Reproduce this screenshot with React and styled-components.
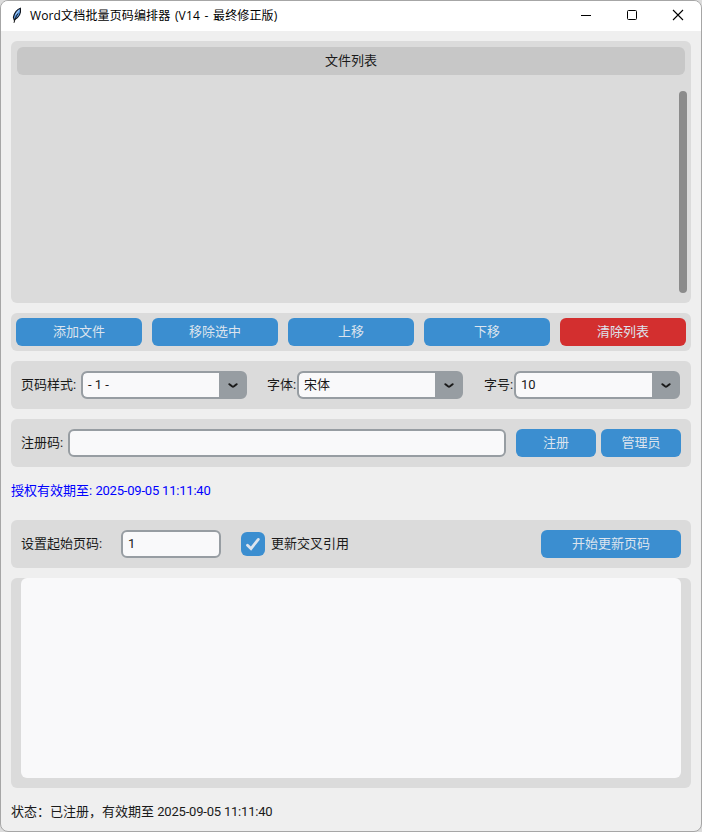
import React from "react";
import styled, { createGlobalStyle } from "styled-components";

const GlobalStyle = createGlobalStyle`
  * { box-sizing: border-box; }
  html, body { margin: 0; padding: 0; background: #dcdcdc; }
  button, input { font: inherit; }
`;

const Window = styled.div`
  width: 702px;
  height: 832px;
  display: flex;
  flex-direction: column;
  overflow: hidden;
  border: 1px solid #a6a6a6;
  border-radius: 8px;
  background: #efefef;
  color: #1a1a1a;
  font: 13px/18px Roboto, "Noto Sans CJK SC", sans-serif;
  white-space: nowrap;
`;

const TitleBar = styled.header`
  height: 30px;
  flex: none;
  display: flex;
  align-items: center;
  padding-left: 9px;
  background: #fff;
  color: #000;
`;

const Title = styled.h1`
  flex: 1;
  margin: 0 0 0 6px;
  font: 400 12px/18px "Open Sans", "Noto Sans CJK SC", sans-serif;
  letter-spacing: 0.14px;
  word-spacing: 1.3px;
`;

const WindowControl = styled.button`
  width: 46px;
  height: 30px;
  padding: 0 0 2px;
  border: 0;
  background: none;
  display: flex;
  align-items: center;
  justify-content: center;
`;

const Content = styled.main`
  flex: 1;
  display: flex;
  flex-direction: column;
  gap: 10px;
  padding: 10px;
`;

const Panel = styled.section`
  flex: none;
  border-radius: 6px;
  background: #dbdbdb;
`;

const FilePanel = styled(Panel)`
  height: 262px;
  padding: 6px 4px 10px 6px;
  display: flex;
  flex-direction: column;
  align-items: flex-end;
  gap: 16px;
`;

const ListHeader = styled.h2`
  width: 668px;
  height: 28px;
  margin: 0 2px 0 0;
  border-radius: 6px;
  background: #c7c7c7;
  font-size: 13px;
  font-weight: 400;
  line-height: 27px;
  text-align: center;
`;

const ScrollThumb = styled.div`
  width: 8px;
  height: 202px;
  border-radius: 4px;
  background: #8b8b8b;
`;

const ButtonRow = styled(Panel)`
  height: 38px;
  padding: 5px;
  display: grid;
  grid-template-columns: repeat(5, 1fr);
  gap: 10px;
`;

const Button = styled.button`
  width: ${(p) => p.$width || "auto"};
  height: 28px;
  padding: 0 0 1px;
  border: 0;
  border-radius: 6px;
  background: ${(p) => (p.$danger ? "#d32f2f" : "#3b8ed0")};
  color: #dce4ee;
  line-height: 27px;
`;

const FormRow = styled(Panel)`
  height: 48px;
  padding: 0 10px;
  display: flex;
  align-items: center;
`;

const Field = styled.label`
  display: flex;
  align-items: center;
  gap: ${(p) => p.$gap || "0"};
  margin-right: ${(p) => p.$after || "0"};
`;

const Caption = styled.span`
  width: ${(p) => p.$width};
  flex: none;
`;

const Select = styled.div`
  width: 166px;
  height: 28px;
  display: flex;
  overflow: hidden;
  border: 2px solid #979da2;
  border-radius: 6px;
  background: #979da2;
`;

const SelectValue = styled.span`
  flex: 1;
  padding-left: 5px;
  border-radius: 4px 0 0 4px;
  background: #f9f9fa;
  line-height: 23px;
`;

const SelectArrow = styled.span`
  width: 26px;
  padding: 1px 0 0 2px;
  display: flex;
  align-items: center;
  justify-content: center;
`;

const Input = styled.input`
  width: ${(p) => p.$width};
  height: 28px;
  padding: 0 5px 1px;
  border: 2px solid #979da2;
  border-radius: 6px;
  outline: 0;
  background: #f9f9fa;
  color: #1a1a1a;
`;

const ButtonGroup = styled.div`
  display: flex;
  gap: 5px;
  margin-left: ${(p) => (p.$end ? "auto" : "10px")};
`;

const License = styled.p`
  height: 28px;
  margin: 0 0 5px;
  padding-top: 5px;
  color: #00f;
`;

const DateText = styled.time`
  letter-spacing: -0.2px;
`;

const CheckBox = styled.span`
  width: 24px;
  height: 24px;
  display: flex;
  align-items: center;
  justify-content: center;
  border-radius: 6px;
  background: #3b8ed0;
`;

const LogPanel = styled(Panel)`
  height: 210px;
  padding: 0 10px 10px;
`;

const LogText = styled.div`
  height: 200px;
  border-radius: 6px;
  background: #f9f9fa;
`;

const Status = styled.footer`
  padding-top: 5px;
`;

const Feather = () => (
  <svg width="14" height="18" viewBox="0 0 14 18" aria-hidden="true">
    <path d="M10.4 1.2C7.4 2 4.2 6 3.4 10.2L4.2 13C7.6 11.2 11.4 7.3 10.4 1.2Z" fill="#5b9be6" stroke="#10151d" strokeWidth="1.1" />
    <path d="M8 6.5C6.4 8.5 5 11.5 4 15.8" fill="none" stroke="#111" strokeWidth="1" />
    <path d="M9 3.2L5.6 7.6" stroke="#b7d5f5" strokeWidth="1" />
  </svg>
);

const ArrowDown = () => (
  <svg width="10" height="6" viewBox="0 0 10 6" aria-hidden="true">
    <path d="M1.4 1.2L4 3.3Q5 4 6 3.3L8.6 1.2" fill="none" stroke="#1a1a1a" strokeWidth="2" strokeLinecap="round" />
  </svg>
);

const styleOptions = [
  { label: "页码样式:", value: "- 1 -", width: "60px", after: "20px" },
  { label: "字体:", value: "宋体", width: "30px", after: "21px" },
  { label: "字号:", value: "10", width: "30px", after: "0" },
];

export default function App() {
  return (
    <>
      <GlobalStyle />
      <Window>
        <TitleBar>
          <Feather />
          <Title>Word文档批量页码编排器 (V14 - 最终修正版)</Title>
          <WindowControl aria-label="最小化">
            <svg width="12" height="12"><path d="M1 6.5h10" stroke="#000" /></svg>
          </WindowControl>
          <WindowControl aria-label="最大化">
            <svg width="12" height="12"><rect x="1.5" y="1.5" width="9" height="9" rx="1" fill="none" stroke="#000" /></svg>
          </WindowControl>
          <WindowControl aria-label="关闭">
            <svg width="12" height="12"><path d="M1 1l10 10M11 1L1 11" stroke="#000" strokeWidth="1.1" /></svg>
          </WindowControl>
        </TitleBar>
        <Content>
          <FilePanel>
            <ListHeader>文件列表</ListHeader>
            <ScrollThumb />
          </FilePanel>
          <ButtonRow>
            <Button>添加文件</Button>
            <Button>移除选中</Button>
            <Button>上移</Button>
            <Button>下移</Button>
            <Button $danger>清除列表</Button>
          </ButtonRow>
          <FormRow>
            {styleOptions.map((o) => (
              <Field key={o.label} $after={o.after}>
                <Caption $width={o.width}>{o.label}</Caption>
                <Select>
                  <SelectValue>{o.value}</SelectValue>
                  <SelectArrow><ArrowDown /></SelectArrow>
                </Select>
              </Field>
            ))}
          </FormRow>
          <FormRow>
            <Field>
              <Caption $width="47px">注册码:</Caption>
              <Input $width="438px" />
            </Field>
            <ButtonGroup>
              <Button $width="80px">注册</Button>
              <Button $width="80px">管理员</Button>
            </ButtonGroup>
          </FormRow>
          <License>授权有效期至: <DateText>2025-09-05 11:11:40</DateText></License>
          <FormRow>
            <Field $after="20px">
              <Caption $width="100px">设置起始页码:</Caption>
              <Input $width="100px" defaultValue="1" />
            </Field>
            <Field $gap="6px">
              <CheckBox>
                <svg width="16" height="14" viewBox="0 0 16 14">
                  <path d="M2.5 8.3L6 11.6L13.3 2.4" fill="none" stroke="#dce4ee" strokeWidth="2.8" strokeLinecap="round" />
                </svg>
              </CheckBox>
              <Caption $width="78px">更新交叉引用</Caption>
            </Field>
            <ButtonGroup $end>
              <Button $width="140px">开始更新页码</Button>
            </ButtonGroup>
          </FormRow>
          <LogPanel>
            <LogText />
          </LogPanel>
          <Status>状态：已注册，有效期至 <DateText>2025-09-05 11:11:40</DateText></Status>
        </Content>
      </Window>
    </>
  );
}
